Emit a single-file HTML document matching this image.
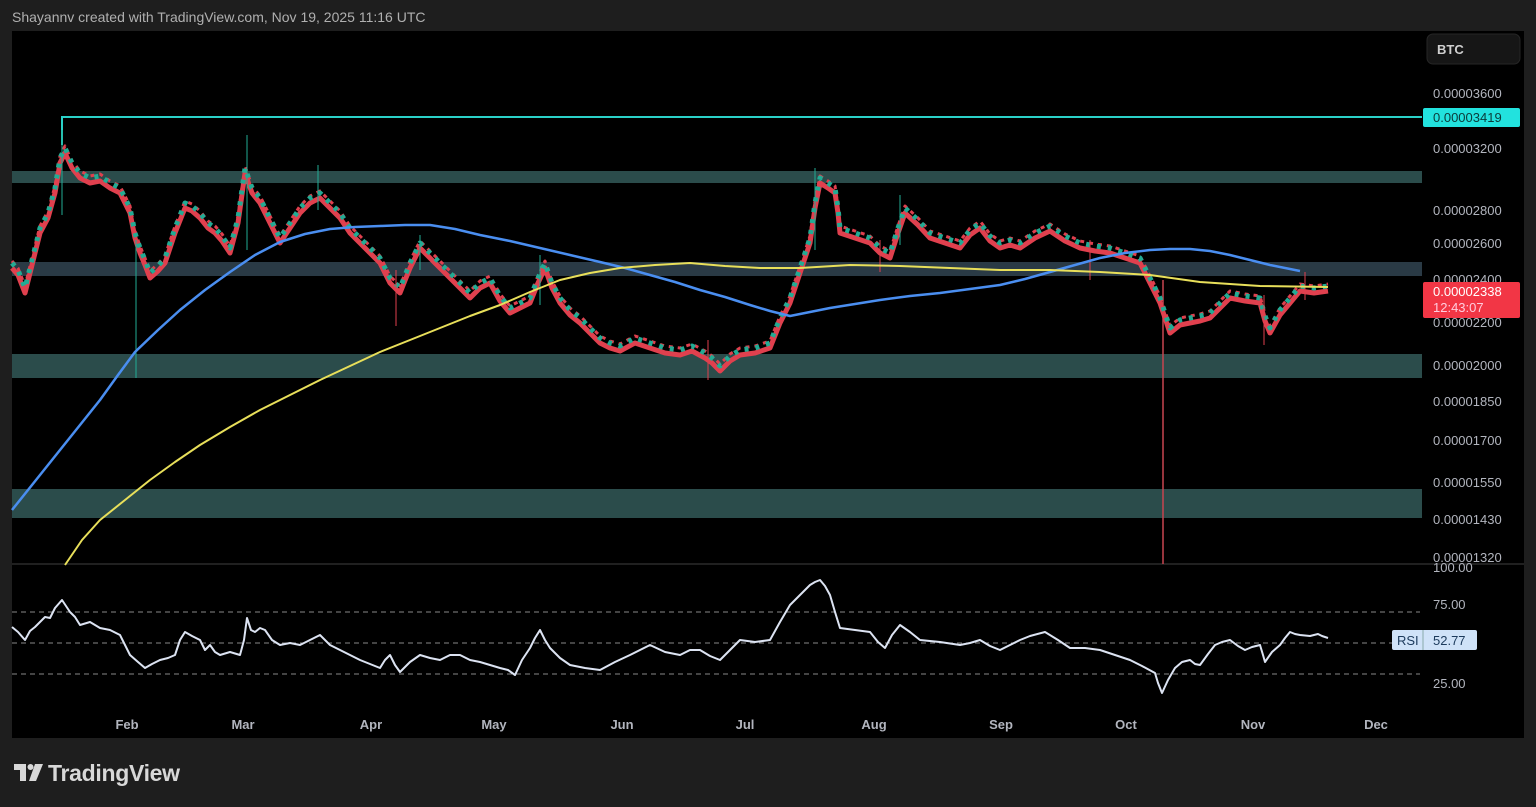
<!DOCTYPE html>
<html><head><meta charset="utf-8"><style>
body{margin:0;width:1536px;height:807px;background:#1e1e1e;overflow:hidden;font-family:"Liberation Sans",sans-serif;position:relative}
.hdr{position:absolute;left:12px;top:9px;color:#b0b0b0;font-size:14px;z-index:2}
svg{position:absolute;left:0;top:0}
.logo{position:absolute;left:48px;top:760px;color:#d8d8d8;font-size:23px;font-weight:bold;letter-spacing:-0.3px}
</style></head><body>
<div class="hdr">Shayannv created with TradingView.com, Nov 19, 2025 11:16 UTC</div>
<svg width="1536" height="807" xmlns="http://www.w3.org/2000/svg">
<defs><polyline id="pp" points="12,265 18,272 25,290 32,262 40,230 48,215 55,190 60,160 65,150 72,165 80,175 90,180 100,178 110,185 120,190 130,210 135,235 140,250 145,262 150,275 158,268 165,260 175,230 185,205 192,208 200,215 208,225 215,230 222,238 230,250 238,220 245,170 252,190 260,200 270,220 280,240 290,225 300,210 310,200 320,195 330,205 340,215 350,230 360,240 370,250 380,260 390,280 400,290 410,265 420,245 430,255 440,265 455,280 470,295 480,285 490,280 500,298 510,310 520,305 530,300 538,280 545,265 552,285 560,300 570,312 580,320 590,330 600,340 610,345 620,348 635,340 650,345 665,350 680,352 692,348 705,355 712,360 720,368 730,358 740,352 755,350 770,345 780,320 790,300 800,270 810,240 815,205 820,180 828,185 835,190 838,210 840,230 855,235 870,240 880,250 890,255 898,230 905,210 918,222 930,235 945,240 960,245 970,232 980,225 990,238 1000,245 1010,242 1020,245 1035,235 1050,228 1065,238 1080,245 1095,248 1110,250 1125,255 1140,260 1150,280 1160,300 1165,315 1170,330 1180,322 1190,320 1200,318 1210,315 1220,305 1230,295 1245,298 1260,300 1265,318 1270,330 1280,312 1290,300 1300,288 1314,290 1328,288"/></defs>
<rect x="12" y="31" width="1512" height="707" fill="#000"/>
<rect x="12" y="171" width="1410" height="12" fill="#2b4c4b"/>
<rect x="12" y="262" width="1410" height="14" fill="#2a3a45"/>
<rect x="12" y="354" width="1410" height="24" fill="#2b4c4b"/>
<rect x="12" y="489" width="1410" height="29" fill="#2b4c4b"/>
<line x1="12" y1="564" x2="1524" y2="564" stroke="#2a2a2a" stroke-width="1.5"/>
<polyline points="62,145 62,117 1422,117" fill="none" stroke="#2ad1c8" stroke-width="2"/>
<line x1="1163" y1="280" x2="1163" y2="564" stroke="#c84550" stroke-width="1.5"/>
<g fill="none" stroke-linejoin="round">
<use href="#pp" stroke="#e0404e" stroke-width="5" transform="translate(0,3)"/>
<use href="#pp" stroke="#e0404e" stroke-width="3" stroke-dasharray="4,5" transform="translate(0,-4)"/>
<use href="#pp" stroke="#22ab94" stroke-width="5" stroke-dasharray="4,7" transform="translate(0,-2)"/>
</g>
<g stroke-width="1">
<line x1="62" y1="130" x2="62" y2="215" stroke="#22ab94"/><line x1="136" y1="240" x2="136" y2="378" stroke="#22ab94"/>
<line x1="247" y1="135" x2="247" y2="250" stroke="#22ab94"/><line x1="318" y1="165" x2="318" y2="210" stroke="#22ab94"/>
<line x1="396" y1="270" x2="396" y2="326" stroke="#e0404e"/><line x1="420" y1="235" x2="420" y2="270" stroke="#22ab94"/>
<line x1="540" y1="255" x2="540" y2="305" stroke="#22ab94"/><line x1="708" y1="340" x2="708" y2="380" stroke="#e0404e"/>
<line x1="815" y1="168" x2="815" y2="250" stroke="#22ab94"/><line x1="880" y1="240" x2="880" y2="272" stroke="#e0404e"/>
<line x1="900" y1="195" x2="900" y2="245" stroke="#22ab94"/><line x1="1090" y1="240" x2="1090" y2="280" stroke="#e0404e"/>
<line x1="1264" y1="295" x2="1264" y2="345" stroke="#e0404e"/><line x1="1305" y1="272" x2="1305" y2="300" stroke="#e0404e"/>
</g>
<polyline fill="none" stroke="#4a8ef0" stroke-width="2.5" stroke-linejoin="round" points="12,510 40,475 60,450 80,425 100,400 118,375 135,352 158,330 180,310 205,290 230,272 255,255 280,242 305,234 330,229 355,227 380,226 405,225 430,225 455,229 480,235 510,241 540,248 570,255 600,262 625,268 650,275 675,282 700,290 725,297 750,305 770,311 790,316 810,312 830,308 855,304 880,300 910,296 940,293 970,289 1000,285 1025,279 1050,272 1075,265 1100,258 1125,253 1150,250 1170,249 1190,249 1210,251 1230,255 1250,260 1270,265 1300,271"/>
<polyline fill="none" stroke="#e8df5a" stroke-width="2" stroke-linejoin="round" points="65,565 82,540 100,520 125,500 150,480 175,462 200,445 230,427 260,410 290,395 320,380 350,366 380,352 410,340 440,328 470,316 500,305 530,292 560,280 590,273 620,268 655,265 690,263 725,266 760,268 800,268 850,265 900,266 950,268 1000,270 1050,270 1100,272 1150,275 1200,282 1260,286 1328,287"/>
<g stroke="#888" stroke-dasharray="5,4" stroke-width="1"><line x1="12" y1="612" x2="1420" y2="612"/><line x1="12" y1="643" x2="1420" y2="643"/><line x1="12" y1="674" x2="1420" y2="674"/></g>
<polyline fill="none" stroke="#dce3f2" stroke-width="2" stroke-linejoin="round" points="12,627 18,632 25,640 30,631 35,627 40,622 45,617 50,618 55,608 62,600 66,606 70,612 75,617 80,625 90,622 100,628 110,630 120,635 125,645 130,655 138,662 145,668 152,664 160,660 168,658 175,655 180,640 185,632 192,636 200,640 205,650 210,645 215,652 220,655 230,652 240,655 244,640 247,618 251,630 255,632 260,628 265,630 272,640 280,645 290,643 300,645 310,640 320,635 330,645 340,650 350,655 360,660 370,664 380,668 385,660 390,655 395,665 400,672 410,662 420,655 430,658 440,660 450,655 460,655 470,660 480,662 490,665 500,668 508,670 515,675 522,660 530,648 535,638 540,630 545,640 550,648 560,658 570,665 585,668 600,670 615,662 630,655 640,650 650,645 665,652 680,655 690,650 700,650 710,656 720,660 730,650 740,640 755,642 770,640 780,622 790,605 800,595 810,585 815,582 820,580 825,586 830,595 835,612 840,628 855,630 870,632 878,642 885,648 892,635 900,625 910,632 920,640 940,642 960,645 970,643 980,640 990,646 1000,650 1010,645 1020,640 1030,636 1045,632 1058,640 1070,648 1085,648 1100,650 1115,655 1130,660 1142,666 1155,673 1158,683 1162,693 1168,680 1175,668 1182,662 1190,660 1195,664 1200,665 1208,654 1215,645 1222,642 1230,640 1238,646 1245,650 1252,647 1260,645 1263,655 1265,662 1272,652 1280,645 1285,638 1290,632 1295,634 1300,635 1310,636 1318,634 1322,636 1328,638"/>
<g fill="#b2b5be" font-size="13" font-family="Liberation Sans">
<text x="1433" y="98">0.00003600</text>
<text x="1433" y="153">0.00003200</text>
<text x="1433" y="215">0.00002800</text>
<text x="1433" y="248">0.00002600</text>
<text x="1433" y="284">0.00002400</text>
<text x="1433" y="327">0.00002200</text>
<text x="1433" y="370">0.00002000</text>
<text x="1433" y="406">0.00001850</text>
<text x="1433" y="445">0.00001700</text>
<text x="1433" y="487">0.00001550</text>
<text x="1433" y="524">0.00001430</text>
<text x="1433" y="562">0.00001320</text>
<text x="1433" y="572">100.00</text>
<text x="1433" y="609">75.00</text>
<text x="1433" y="688">25.00</text>
</g>
<rect x="1423" y="108" width="97" height="19" rx="2" fill="#22e2de"/>
<text x="1433" y="122" font-size="13" fill="#0b3b3a">0.00003419</text>
<rect x="1423" y="282" width="97" height="36" rx="2" fill="#f23645"/>
<text x="1433" y="296" font-size="13" fill="#fff">0.00002338</text>
<text x="1433" y="312" font-size="13" fill="#fcd">12:43:07</text>
<rect x="1427" y="34" width="93" height="30" rx="6" fill="#161616" stroke="#262626"/>
<text x="1437" y="54" font-size="13" fill="#d0d0d0" font-weight="bold">BTC</text>
<rect x="1392" y="630" width="85" height="20" rx="2" fill="#cfe2f8"/>
<line x1="1423" y1="630" x2="1423" y2="650" stroke="#8aa"/>
<text x="1397" y="645" font-size="13" fill="#1c3a5c">RSI</text>
<text x="1433" y="645" font-size="13" fill="#1c3a5c">52.77</text>
<g fill="#b2b5be" font-size="13" text-anchor="middle" font-weight="bold">
<text x="127" y="729">Feb</text><text x="243" y="729">Mar</text><text x="371" y="729">Apr</text><text x="494" y="729">May</text><text x="622" y="729">Jun</text><text x="745" y="729">Jul</text><text x="874" y="729">Aug</text><text x="1001" y="729">Sep</text><text x="1126" y="729">Oct</text><text x="1253" y="729">Nov</text><text x="1376" y="729">Dec</text>
</g>
<g fill="#d8d8d8">
<path d="M14,764 H26 V781 H20 V770 H14 Z"/>
<circle cx="30.5" cy="767" r="3"/>
<path d="M35,764 H43 L36,781 H29 Z"/>
</g>
</svg>
<div class="logo">TradingView</div>
</body></html>
